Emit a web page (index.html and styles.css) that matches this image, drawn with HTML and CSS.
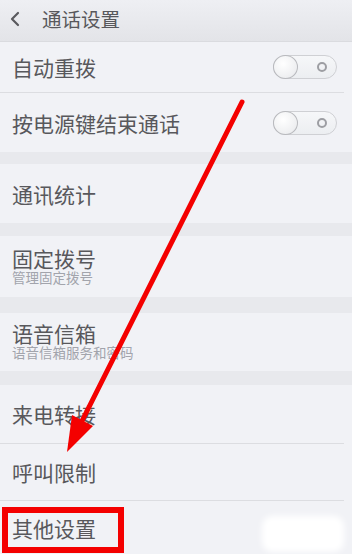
FILE: index.html
```html
<!DOCTYPE html>
<html lang="zh">
<head>
<meta charset="utf-8">
<link rel="stylesheet" href="styles.css">
</head>
<body>
<div class="screen">
  <header class="topbar">
    <svg class="back" width="12" height="16" viewBox="0 0 12 16"><path d="M9 2 L3 8 L9 14" fill="none" stroke="#5a5a5e" stroke-width="2.2" stroke-linecap="round" stroke-linejoin="round"/></svg>
    <span class="title">通话设置</span>
  </header>

  <div class="row h50">
    <span class="label">自动重拨</span>
    <span class="toggle"><span class="knob"></span><span class="ring"></span></span>
  </div>
  <div class="divider"></div>
  <div class="row h59">
    <span class="label">按电源键结束通话</span>
    <span class="toggle"><span class="knob"></span><span class="ring"></span></span>
  </div>

  <div class="band b12"></div>
  <div class="row h59"><span class="label">通讯统计</span></div>
  <div class="band b13"></div>

  <div class="row two h61">
    <span class="label">固定拨号</span>
    <span class="sub">管理固定拨号</span>
  </div>
  <div class="band b16"></div>
  <div class="row two h58">
    <span class="label">语音信箱</span>
    <span class="sub">语音信箱服务和密码</span>
  </div>
  <div class="band b14"></div>

  <div class="row h58"><span class="label">来电转接</span></div>
  <div class="divider"></div>
  <div class="row h56"><span class="label">呼叫限制</span></div>
  <div class="divider"></div>
  <div class="row h53 last"><span class="label">其他设置</span></div>

  <div class="blob"></div>
  <div class="redbox"></div>
  <svg class="arrow" width="352" height="554" viewBox="0 0 352 554">
    <line x1="242" y1="102" x2="82" y2="421" stroke="#f40000" stroke-width="5" stroke-linecap="round"/>
    <polygon points="67,452 93,426 72,415" fill="#f40000"/>
  </svg>
</div>
</body>
</html>
```

FILE: styles.css
```css
* { box-sizing: border-box; }
html, body { margin: 0; padding: 0; }
body {
  width: 352px;
  height: 554px;
  overflow: hidden;
  background: #f1f2f6;
  font-family: "Noto Sans CJK SC", "Noto Sans", sans-serif;
}
.screen {
  position: relative;
  width: 352px;
  height: 554px;
  display: flex;
  flex-direction: column;
  overflow: hidden;
}
.topbar {
  height: 42px;
  flex: none;
  display: flex;
  align-items: center;
  padding-left: 9px;
  padding-bottom: 3px;
  background: linear-gradient(#eeeff3, #e3e4e8);
  border-bottom: 1px solid #dadbdf;
}
.back { flex: none; }
.title {
  margin-left: 21px;
  font-size: 19.5px;
  line-height: 24px;
  color: #58585c;
}
.row {
  flex: none;
  display: flex;
  align-items: center;
  justify-content: space-between;
  padding: 0 15px 0 12px;
  background: #f1f2f6;
}
.row.two {
  flex-direction: column;
  align-items: flex-start;
  justify-content: flex-start;
  padding-top: 10px;
}
.h50 { height: 50px; }
.h53 { height: 53px; }
.h56 { height: 56px; }
.h58 { height: 58px; }
.h59 { height: 59px; }
.h61 { height: 61px; }
.h58.two { padding-top: 8px; }
.label {
  font-size: 21px;
  line-height: 24px;
  color: #58585c;
}
.sub {
  font-size: 13.5px;
  line-height: 14px;
  color: #a2a4ac;
}
.divider {
  flex: none;
  height: 1px;
  width: 344px;
  background: #dcdde1;
}
.band { flex: none; background: #e8e9ed; }
.b12 { height: 12px; }
.b13 { height: 13px; }
.b14 { height: 14px; }
.b16 { height: 16px; }

.toggle {
  position: relative;
  width: 64px;
  height: 24px;
  border-radius: 12px;
  border: 1px solid #cfd0d4;
  background: linear-gradient(#f6f7f9, #eceef1);
}
.knob {
  position: absolute;
  left: -1px;
  top: -1px;
  width: 25px;
  height: 24px;
  border-radius: 50%;
  border: 1px solid #b9babe;
  background: radial-gradient(circle at 40% 35%, #ffffff, #eeeff1 70%, #e2e3e6);
}
.ring {
  position: absolute;
  left: 43px;
  top: 6px;
  width: 10px;
  height: 10px;
  border-radius: 50%;
  border: 2px solid #9d9ea3;
}
.blob {
  position: absolute;
  left: 262px;
  top: 516px;
  width: 82px;
  height: 36px;
  background: #ffffff;
  border-radius: 10px;
  filter: blur(3px);
}
.redbox {
  position: absolute;
  left: 2px;
  top: 507px;
  width: 122px;
  height: 46px;
  border: 6px solid #f40000;
}
.arrow {
  position: absolute;
  left: 0;
  top: 0;
}
```
